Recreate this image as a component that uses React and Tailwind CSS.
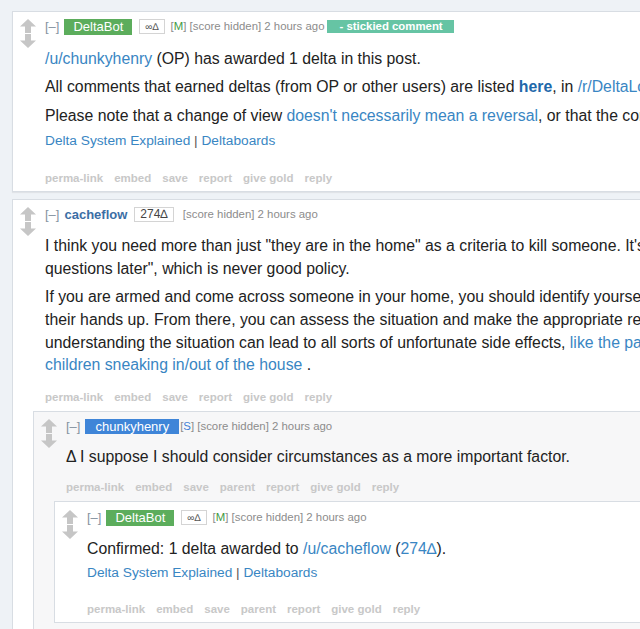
import React from "react";

const LINK = "text-[#3986c3]";

function Arrows({ top = "pt-[7px]" }) {
  return (
    <div className={`flex w-[32px] shrink-0 flex-col gap-[1px] pl-[7px] ${top}`}>
      <svg width="16" height="14" viewBox="0 0 16 14">
        <path d="M8 0L16 7.5H11V14H5V7.5H0Z" fill="#c6c6c6" />
      </svg>
      <svg width="16" height="14" viewBox="0 0 16 14">
        <path d="M5 0H11V6.5H16L8 14L0 6.5H5Z" fill="#c6c6c6" />
      </svg>
    </div>
  );
}

function Collapse() {
  return <span className="text-[13px] text-[#8593a1]">[–]</span>;
}

function Flair({ children }) {
  return (
    <span className="ml-[7px] flex h-[15px] items-center border border-[#d4d4d4] bg-white px-[5px] text-[10px] text-[#555]">
      {children}
    </span>
  );
}

function Meta({ children }) {
  return <span className="ml-[6px] text-[11.4px] text-[#8c8c8c]">{children}</span>;
}

function Actions({ items, className = "" }) {
  return (
    <div className={`flex gap-[11px] text-[11.5px] font-bold leading-[16px] text-[#c8c8c8] ${className}`}>
      {items.map((a) => (
        <span key={a}>{a}</span>
      ))}
    </div>
  );
}

function DeltaLinks({ className = "" }) {
  return (
    <div className={`text-[13.7px] leading-[18px] text-[#555] ${className}`}>
      <span className={LINK}>Delta System Explained</span> |{" "}
      <span className={LINK}>Deltaboards</span>
    </div>
  );
}

const ACTIONS = ["perma-link", "embed", "save", "report", "give gold", "reply"];
const CHILD_ACTIONS = ["perma-link", "embed", "save", "parent", "report", "give gold", "reply"];

export default function App() {
  return (
    <div className="h-[629px] w-[640px] overflow-hidden bg-[#eef2f6] pl-[12px] pt-[11px] font-['Liberation_Sans',Arial,sans-serif] text-[#222]">
      <div className="flex w-[1000px] flex-col gap-[7px]">
        {/* Stickied DeltaBot comment */}
        <div className="border border-[#d8dde3] bg-white shadow-[0_1px_1px_rgba(0,0,0,0.06)]">
          <div className="flex">
            <Arrows />
            <div className="flex-1 pb-[5px] pt-[6px]">
              <div className="flex h-[17px] items-center whitespace-nowrap">
                <Collapse />
                <span className="ml-[5px] flex h-[16px] items-center bg-[#5cad5c] px-[9px] text-[13px] text-white">
                  DeltaBot
                </span>
                <Flair>∞∆</Flair>
                <Meta>
                  [<span className="text-[#3f9a3f]">M</span>] [score hidden] 2 hours ago
                </Meta>
                <span className="ml-[3px] flex h-[13px] items-center bg-[#66c4a4] pl-[12px] pr-[11px] text-[11.4px] font-bold text-white">
                  - stickied comment
                </span>
              </div>
              <div className="mt-[13px] whitespace-nowrap text-[15.8px] leading-[22.8px]">
                <p>
                  <span className={LINK}>/u/chunkyhenry</span> (OP) has awarded 1 delta in this post.
                </p>
                <p className="mt-[5.7px]">
                  All comments that earned deltas (from OP or other users) are listed{" "}
                  <span className="font-bold text-[#2168aa]">here</span>, in{" "}
                  <span className={LINK}>/r/DeltaLog/comments/7x8p2k/deltas_awarded_in_cmv</span>.
                </p>
                <p className="mt-[5.7px]">
                  Please note that a change of view{" "}
                  <span className={LINK}>doesn't necessarily mean a reversal</span>, or that the conversation has ended.
                </p>
              </div>
              <DeltaLinks className="mt-[4px]" />
              <Actions items={ACTIONS} className="mt-[20px]" />
            </div>
          </div>
        </div>

        {/* cacheflow comment */}
        <div className="border border-[#d8dde3] bg-white">
          <div className="flex">
            <Arrows />
            <div className="flex-1 pt-[6px]">
              <div className="flex h-[17px] items-center whitespace-nowrap">
                <Collapse />
                <span className="ml-[5px] text-[13px] font-bold text-[#3b6ea5]">cacheflow</span>
                <Flair>
                  <span className="text-[12px] text-[#444]">274∆</span>
                </Flair>
                <Meta>&nbsp;[score hidden] 2 hours ago</Meta>
              </div>
              <div className="mt-[12px] whitespace-nowrap text-[15.8px] leading-[22.8px]">
                <p>
                  I think you need more than just "they are in the home" as a criteria to kill someone. It's basically "shoot first, ask
                  <br />
                  questions later", which is never good policy.
                </p>
                <p className="mt-[5.7px]">
                  If you are armed and come across someone in your home, you should identify yourself and tell them to put
                  <br />
                  their hands up. From there, you can assess the situation and make the appropriate response. Not
                  <br />
                  understanding the situation can lead to all sorts of unfortunate side effects,{" "}
                  <span className={LINK}>
                    like the parents shooting their
                    <br />
                    children sneaking in/out of the house
                  </span>{" "}
                  .
                </p>
              </div>
              <Actions items={ACTIONS} className="mt-[12px]" />
            </div>
          </div>

          {/* replies */}
          <div className="ml-[20px] mt-[6px]">
            <div className="border border-[#d8dde3] bg-[#f7f7f8]">
              <div className="flex">
                <Arrows />
                <div className="flex-1 pt-[6px]">
                  <div className="flex h-[17px] items-center whitespace-nowrap">
                    <Collapse />
                    <span className="ml-[5px] flex h-[15px] items-center bg-[#3f85d8] px-[10px] text-[13px] text-white">
                      chunkyhenry
                    </span>
                    <span className="ml-[1px] text-[11.4px] text-[#8c8c8c]">
                      [<span className="text-[#3f7fd6]">S</span>] [score hidden] 2 hours ago
                    </span>
                  </div>
                  <div className="mt-[11px] whitespace-nowrap text-[15.8px] leading-[22.8px]">
                    <p>Δ I suppose I should consider circumstances as a more important factor.</p>
                  </div>
                  <Actions items={CHILD_ACTIONS} className="mt-[10px]" />
                </div>
              </div>

              <div className="ml-[20px] mt-[6px] pb-[6px]">
                <div className="border border-[#d8dde3] bg-white">
                  <div className="flex">
                    <Arrows top="pt-[8px]" />
                    <div className="flex-1 pb-[5px] pt-[7px]">
                      <div className="flex h-[17px] items-center whitespace-nowrap">
                        <Collapse />
                        <span className="ml-[5px] flex h-[16px] items-center bg-[#5cad5c] px-[9px] text-[13px] text-white">
                          DeltaBot
                        </span>
                        <Flair>∞∆</Flair>
                        <Meta>
                          [<span className="text-[#3f9a3f]">M</span>] [score hidden] 2 hours ago
                        </Meta>
                      </div>
                      <div className="mt-[12px] whitespace-nowrap text-[15.8px] leading-[22.8px]">
                        <p>
                          Confirmed: 1 delta awarded to <span className={LINK}>/u/cacheflow</span> (
                          <span className={LINK}>274∆</span>).
                        </p>
                      </div>
                      <DeltaLinks className="mt-[3px]" />
                      <Actions items={CHILD_ACTIONS} className="mt-[19px]" />
                    </div>
                  </div>
                </div>
              </div>
            </div>
          </div>
        </div>
      </div>
    </div>
  );
}
